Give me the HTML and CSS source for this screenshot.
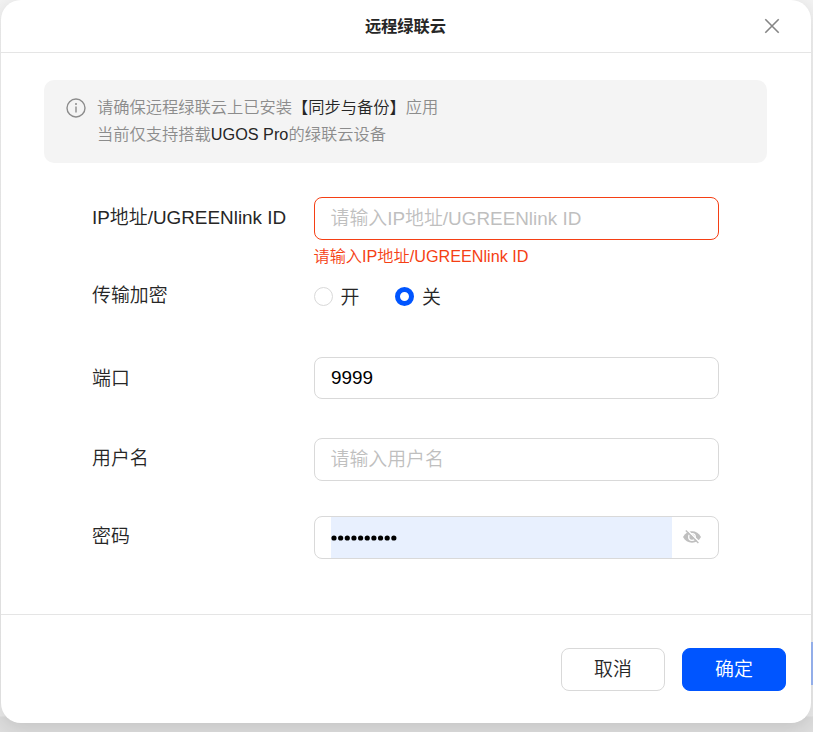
FILE: index.html
```html
<!DOCTYPE html>
<html lang="zh-CN">
<head>
<meta charset="utf-8">
<title>远程绿联云</title>
<link rel="stylesheet" href="styles.css">
</head>
<body>
<div class="backdrop-button"></div>
<main class="dialog">
  <header class="header">
    <h1>远程绿联云</h1>
    <svg class="close" viewBox="0 0 16 16"><path d="M1.3 1.3 14.7 14.7M14.7 1.3 1.3 14.7"/></svg>
  </header>
  <section class="body">
    <div class="notice">
      <svg class="info" viewBox="0 0 20 20"><circle cx="10" cy="10" r="9"/><path d="M10 8.6v6"/><circle class="dot" cx="10" cy="5.9" r="1"/></svg>
      <p><span>请确保远程绿联云上已安装</span><b>【同步与备份】</b><span>应用</span><br><span>当前仅支持搭载</span><b>UGOS Pro</b><span>的绿联云设备</span></p>
    </div>
    <div class="form">
      <div class="row row-address">
        <span class="label">IP地址/UGREENlink ID</span>
        <div class="field">
          <div class="input invalid"><span class="placeholder">请输入IP地址/UGREENlink ID</span></div>
          <div class="error">请输入IP地址/UGREENlink ID</div>
        </div>
      </div>
      <div class="row row-encrypt">
        <span class="label">传输加密</span>
        <div class="radios">
          <span class="radio"><i></i>开</span>
          <span class="radio checked"><i></i>关</span>
        </div>
      </div>
      <div class="row row-port">
        <span class="label">端口</span>
        <div class="input"><span>9999</span></div>
      </div>
      <div class="row row-user">
        <span class="label">用户名</span>
        <div class="input"><span class="placeholder">请输入用户名</span></div>
      </div>
      <div class="row row-password">
        <span class="label">密码</span>
        <div class="input password">
          <div class="autofill"><svg class="dots" viewBox="0 0 66 6"><path d="M3 3h60"/></svg></div>
          <svg class="eye" viewBox="0 0 18 14"><path class="lid" d="M0 7C2 3.3 5.2 1.3 9 1.3S16 3.3 18 7c-2 3.7-5.2 5.7-9 5.7S2 10.7 0 7Z"/><circle class="ring" cx="9" cy="7" r="3.3"/><path class="gap" d="M3.6-.6 17 12.6"/><path class="slash" d="M2.8.6 15.4 13"/></svg>
        </div>
      </div>
    </div>
  </section>
  <footer class="footer">
    <button class="button">取消</button>
    <button class="button primary">确定</button>
  </footer>
</main>
</body>
</html>
```
FILE: styles.css
```css
* { box-sizing: border-box; }
body {
  margin: 0;
  height: 732px;
  overflow: hidden;
  padding-left: 1px;
  background: linear-gradient(#f3f3f3 0, #ebebeb 716px, #dedede 717px);
  color: #262626;
  font: 350 18.9px/24px "Liberation Sans", "Noto Sans CJK SC DemiLight", "Noto Sans CJK SC", sans-serif;
}
.backdrop-button {
  position: absolute;
  left: 800px;
  top: 642px;
  width: 13px;
  height: 43px;
  background: #9bb8f6;
}
.dialog {
  position: relative;
  display: flex;
  flex-direction: column;
  width: 810px;
  height: 723px;
  background: #fff;
  border-radius: 20px;
  box-shadow: 0 5px 20px rgba(0, 0, 0, .12);
}
.header {
  display: flex;
  align-items: center;
  height: 53px;
  padding: 0 31px 0 46px;
  border-bottom: 1px solid #e5e5e5;
}
h1 {
  flex: 1;
  margin: 0;
  text-align: center;
  font-family: "Liberation Sans", "Noto Sans CJK SC", sans-serif;
  font-size: 16.25px;
  font-weight: 700;
}
.close {
  width: 16px;
  height: 16px;
  fill: none;
  stroke: #858585;
  stroke-width: 1.6;
}
.body {
  flex: 1;
  padding: 27px 44px 0 43px;
}
.notice {
  display: flex;
  height: 83px;
  padding: 14px 22px;
  background: #f4f4f4;
  border-radius: 10px;
}
.info {
  width: 20px;
  height: 20px;
  margin: 4px 11px 0 0;
  fill: none;
  stroke: #8c8c8c;
  stroke-width: 1.4;
}
.info .dot { fill: #8c8c8c; stroke: none; }
.notice p {
  margin: 0;
  color: #8c8c8c;
  font-size: 16.25px;
  line-height: 27px;
  white-space: nowrap;
}
.notice b { color: #262626; font-weight: inherit; }
.form { padding: 34px 48px 0 48px; }
.row {
  display: grid;
  grid-template-columns: 222px 405px;
}
.label { white-space: nowrap; }
.row-address { height: 88px; }
.row-address .label { padding-top: 9px; }
.row-encrypt { height: 72px; }
.row-encrypt .label { margin-top: -1px; }
.row-port { height: 81px; }
.row-port .label { padding-top: 10px; }
.row-port .input { height: 42px; }
.row-user { height: 78px; }
.row-user .label, .row-password .label { padding-top: 9px; }
.input {
  display: flex;
  align-items: center;
  height: 43px;
  padding: 0 16px;
  border: 1px solid #d9d9d9;
  border-radius: 8px;
  color: #000;
}
.input.invalid { border-color: #f53f14; }
.placeholder { color: #bfbfbf; margin-left: -0.5px; }
.error {
  margin: 4px 0 0 -0.5px;
  color: #f53f14;
  font-size: 16.2px;
}
.radios { display: flex; gap: 36px; padding-top: 1px; height: 25px; }
.radio { display: flex; align-items: flex-start; gap: 7.5px; }
.radio i {
  width: 19px;
  height: 19px;
  margin-top: 1px;
  border: 1px solid #d9d9d9;
  border-radius: 50%;
}
.radio.checked i { border: 5px solid #0055ff; }
.password { padding-right: 17px; }
.autofill {
  display: flex;
  align-items: center;
  width: 341px;
  height: 41px;
  margin-right: 11px;
  background: #e8f0fe;
}
.dots {
  width: 66px;
  height: 6px;
  overflow: visible;
  fill: none;
  stroke: #000;
  stroke-width: 5.2;
  stroke-linecap: round;
  stroke-dasharray: 0 6.65;
}
.eye { width: 18px; height: 14px; margin-top: -2px; fill: none; }
.eye .lid { fill: #bfbfbf; }
.eye .ring { stroke: #fff; stroke-width: 1.3; }
.eye .gap { stroke: #fff; stroke-width: 1.5; }
.eye .slash { stroke: #bfbfbf; stroke-width: 1.4; }
.footer {
  display: flex;
  justify-content: flex-end;
  gap: 17px;
  height: 109px;
  padding: 33px 25px 0 0;
  border-top: 1px solid #e5e5e5;
}
.button {
  width: 104px;
  height: 43px;
  padding: 0;
  border: 1px solid #d9d9d9;
  border-radius: 8px;
  background: #fff;
  color: #262626;
  font: inherit;
}
.button.primary { border-color: #0055ff; background: #0055ff; color: #fff; }
```
